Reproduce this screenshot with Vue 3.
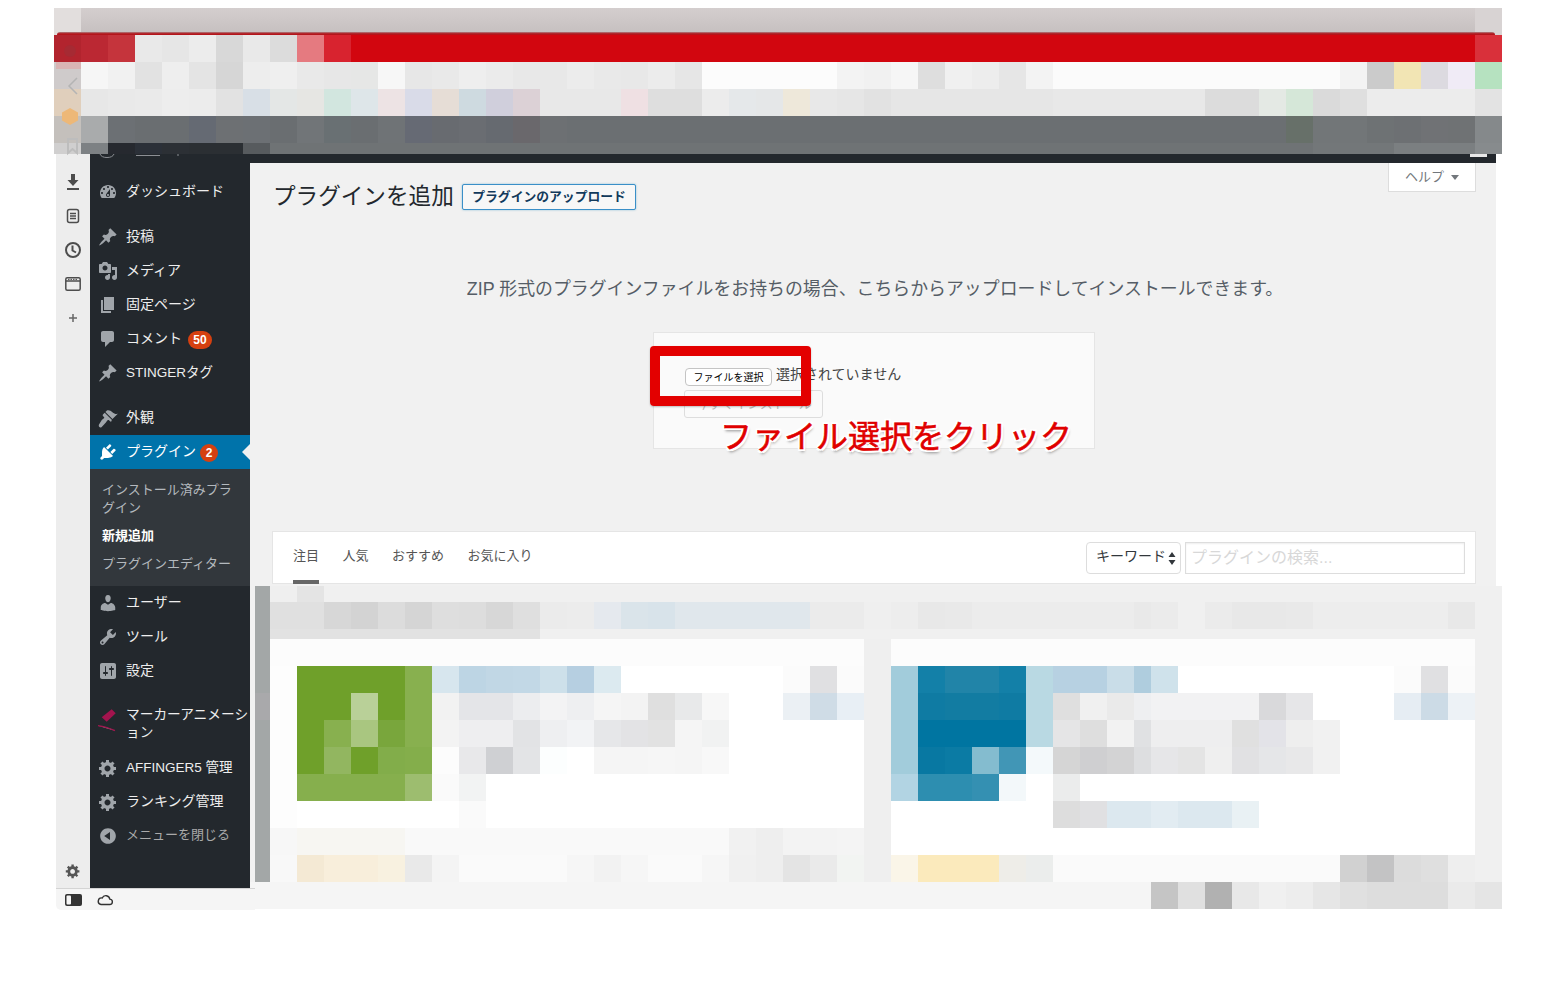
<script setup>
// mosaic rows: "hex" = one 27px cell, "w:hex" = w px wide, "n*hex" = n cells
const parseRow = (h, str) => {
  const cells = [];
  str.split(" ").forEach((t) => {
    let w = 27;
    let n = 1;
    let c = t;
    if (c.includes("*")) [n, c] = c.split("*");
    if (c.includes(":")) [w, c] = c.split(":");
    for (let i = 0; i < Number(n); i++) cells.push({ w: Number(w), c: "#" + c });
  });
  return { h, cells };
};

const topRows = [
  [27, "b2242e bb2833 c5343c e9e9e9 e6e6e6 ececec d8d8d8 e9e9e9 dcdcdc e57a80 d8232f 1124:d2060f d9303a"],
  [27, "cfcbcb f6f6f6 f1f1f1 e2e2e2 eeeeee e4e4e4 d6d6d6 ededed efefef e9e9e9 e7e7e7 e6e7e6 f7f7f7 e7e7e7 e9e9e9 eeeeee ebebeb e8e8e8 e8e8e8 ececec e9e9e9 e8e8e8 ececec e6e6e6 135:fcfcfc f3f3f3 f1f1f1 f6f6f6 dedede f0f0f0 ededed e6e6e6 f3f3f3 287:fbfbfb f3f3f3 cbcbcb f2e5b4 dcdae0 f0ebf6 b6e2c0"],
  [27, "e0cfbc e7e7e7 e9e9e9 eaeaea ededed ececec e2e2e2 d8dfe6 e4e7e6 e6e6e3 d2e6df dee6e9 ede3e4 d9dbe8 e6ddd6 cedae0 d0cfdc dcd1d6 3*e8e8e8 efe0e3 54:dedede ececec e5e8ea e5e7e8 eee8da e8e8e8 e6e6e6 e2e2e2 e6e6e6 135:e6e6e6 152:e8e8e8 54:dcdcdc e4e9e4 d5e7d8 dadada dfdfdf 108:ececec e3e3e3"],
  [27, "c4c0bc a9abac 6c7074 6a6e71 6a6e71 656a73 6d7073 6c7074 6a6e71 717578 697073 6a6e71 6f7376 666a74 686b70 6a6d72 666a70 6a686c 6d7073 719:6b6f72 677069 727678 727678 6e7274 6d7073 707275 6f7274 85898b"],
  [11, "d0cfcf 7d8184 26292f 2b3038 2c3035 2b2f33 2b2f33 575b5e 1043:6f7375 81:737779 81:7b7f81 878b8d"],
].map(([h, s]) => parseRow(h, s));

const SB = "5:f1f1f1 15:a3a7a7 ";
const SB2 = "5:f1f1f1 15:a9a9ab ";
const lowerRows = [
  [16, SB + "efefef e4e4e4 1178:f0f0f0"],
  [27, SB + "2*e0e0e0 d7d7d7 d3d3d3 dcdcdc d5d5d5 dedede dddddd d7d7d7 dfdfdf ebebeb ececec e5e9ee dae4ea d8e3ea 5*e0e7ec ebebeb ebebeb efefef ededed e8e8e8 e9e9e9 6*ececec 17:e9e9e9 ebebeb f0f0f0 ebebeb e8e8e8 e8e8e8 e9e9e9 5*ededed e8e8e8 f0f0f0"],
  [10, SB + "10*e2e2e2 962:f0f0f0"],
  [27, SB + "594:fcfcfc efefef 584:fcfcfc f0f0f0"],
  [27, SB + "fdfdfd 4*6fa02a 88b04f d7e6ee bdd5e4 c1d7e5 c2d8e6 cde0ea b6cfe1 dceaf0 6*ffffff fbfbfb e0e0e2 fbfbfb efefef a2ccdb 1380a8 2184a8 2184a8 1380a8 b9d9e3 b7d1e2 b7d1e2 c9dde8 17:afcdde cfe2eb 8*ffffff fbfbfb e0e0e2 fbfbfb f0f0f0"],
  [27, SB2 + "fdfdfd 2*6fa02a b9d098 6fa02a 88b04f f2f2f2 e4e5e8 e4e5e8 ecedef f3f3f4 eeeff1 f5f5f5 f3f3f3 dfdfdf e8e9ea f7f7f7 2*ffffff ebf0f4 cfdce6 e8eff5 efefef a2ccdb 0f7ba3 127ca2 127ca2 0f7ba3 b9d9e3 dfdfdf f0f0f0 eaeaea 17:eeeff1 4*f2f2f3 d9d9db e6e6e8 3*ffffff e6edf3 ccdbe6 edf2f6 f0f0f0"],
  [27, SB + "fdfdfd 6fa02a 88b04f a9c680 79a63c 88b04f f3f3f3 eeeef0 eeeef0 e2e3e5 eeeff1 f2f3f5 e6e7e9 e3e3e5 e2e2e2 f5f5f5 f1f2f2 5*ffffff efefef a2ccdb 4*0075a1 b9d9e3 e5e5e6 dedede f2f2f2 17:e0e1e3 3*eeeeef e0e0e0 e3e3e8 eeeeee f1f1f1 5*ffffff f0f0f0"],
  [27, SB + "fdfdfd 6fa02a 92b660 6fa02a 82ad4a 84ae4b fcfcfc e8e8ea cfd0d3 e3e4e6 fcfefe ffffff f5f5f5 f5f5f5 f6f6f6 f5f5f5 f8f8f8 5*ffffff efefef a2ccdb 0878a2 0b7ba4 84bccf 4196b6 f4f9fb d5d5d5 cfcfd1 d3d3d4 17:dddee0 e6e6e8 e4e4e4 efefef e1e1e3 e5e6e8 e8e8e9 f1f1f1 5*ffffff f0f0f0"],
  [27, SB + "fdfdfd 4*86af4d 9dbd6f fafafa f2f3f3 14*ffffff efefef b2d4e3 2*2d8eb0 3490b2 f3f8fa ffffff ebecec 395:ffffff f0f0f0"],
  [27, SB + "fdfdfd 6*ffffff fafafa 14*ffffff efefef 6*ffffff dddddd e0e0e2 44:dce8ef e2ecf2 54:dce8ef e9f1f4 216:ffffff f0f0f0"],
  [27, SB + "f7f7f7 108:f7f6f2 324:f9f9f9 f1f1f1 eeeeee f3f3f3 f3f3f3 f4f4f4 efefef 584:ffffff f0f0f0"],
  [27, SB + "f8f8f8 f4e9d4 54:f8eedb f8f1e0 e9e9e9 f4f4f4 108:fafafa f6f6f6 f2f2f2 f6f6f6 fafafa fafafa f6f6f6 f0f0f0 eeeeee e4e4e4 eaeaea f2f4f2 efefef faf5e8 81:fbeabc eeede8 ebedec 287:fafafa d1d1d1 c3c3c4 dcdcdc dfdfdf eeeeee f0f0f0"],
  [27, "901:f5f5f5 c5c5c5 e0e0e0 b1b1b1 e8e8e8 f0f0f0 ededed e6e6e6 e0e0e0 3*dddddd eaeaea e5e5e5"],
].map(([h, s]) => parseRow(h, s));

const icons = {
  dashboard: "M3.76 16h12.48c1.1-1.37 1.76-3.11 1.76-5 0-4.42-3.58-8-8-8s-8 3.58-8 8c0 1.89.66 3.63 1.76 5zM10 4c.55 0 1 .45 1 1s-.45 1-1 1-1-.45-1-1 .45-1 1-1zM6 6c.55 0 1 .45 1 1s-.45 1-1 1-1-.45-1-1 .45-1 1-1zm8 0c.55 0 1 .45 1 1s-.45 1-1 1-1-.45-1-1 .45-1 1-1zm-5.37 5.55L12 7v6c0 1.1-.9 2-2 2s-2-.9-2-2c0-.57.24-1.08.63-1.45zM4 10c.55 0 1 .45 1 1s-.45 1-1 1-1-.45-1-1 .45-1 1-1zm12 0c.55 0 1 .45 1 1s-.45 1-1 1-1-.45-1-1 .45-1 1-1zm-5 3c0-.55-.45-1-1-1s-1 .45-1 1 .45 1 1 1 1-.45 1-1z",
  pin: "M10.44 3.02l1.82-1.82 6.36 6.35-1.83 1.82c-1.05-.68-2.48-.57-3.41.36l-.75.75c-.92.93-1.04 2.35-.35 3.41l-1.83 1.82-2.41-2.41-2.8 2.79c-.42.42-3.38 2.71-3.8 2.29s1.86-3.39 2.28-3.81l2.79-2.79L4.1 9.36l1.83-1.82c1.05.69 2.48.57 3.4-.36l.75-.75c.93-.92 1.05-2.35.36-3.41z",
  media: "M13 11V4c0-.55-.45-1-1-1h-1.67L9 1H5L3.67 3H2c-.55 0-1 .45-1 1v7c0 .55.45 1 1 1h10c.55 0 1-.45 1-1zM7 4.5c1.38 0 2.5 1.12 2.5 2.5S8.38 9.5 7 9.5 4.5 8.38 4.5 7 5.62 4.5 7 4.5zM14 6h5v10.5c0 1.38-1.12 2.5-2.5 2.5S14 17.88 14 16.5s1.12-2.5 2.5-2.5c.17 0 .34.02.5.05V9h-3V6zm-4 8.05V13h2v3.5c0 1.38-1.12 2.5-2.5 2.5S7 17.88 7 16.5 8.12 14 9.5 14c.17 0 .34.02.5.05z",
  page: "M6 15V2h10v13H6zm-1 1h8v2H3V5h2v11z",
  comment: "M5 2h9c1.1 0 2 .9 2 2v7c0 1.1-.9 2-2 2h-2l-5 5v-5H5c-1.1 0-2-.9-2-2V4c0-1.1.9-2 2-2z",
  brush: "M14.48 11.06L7.41 3.99l1.5-1.5c.5-.56 2.3-.47 3.51.32 1.21.8 1.43 1.28 2.91 2.1 1.18.64 2.45 1.26 4.45.85zm-.71.71L6.7 4.7 4.93 6.47c-.39.39-.39 1.02 0 1.41l1.06 1.06c.39.39.39 1.03 0 1.42-.6.6-1.43 1.11-2.21 1.69L1 16.5c-.5 1-.2 2 .4 2.6.6.5 1.6.4 2.3-.2l4.2-4.4c.6-.8 1.1-1.6 1.7-2.2.39-.39 1.03-.39 1.42 0l1.06 1.06c.39.39 1.02.39 1.41 0z",
  plug: "M13.11 4.36L9.87 7.6 8 5.73l3.24-3.24c.35-.34 1.05-.2 1.56.32.52.51.66 1.21.31 1.55zm-8 1.77l.91-1.12 9.01 9.01-1.19.84c-.71.71-2.63 1.16-3.82 1.16H6.14L4.9 17.26c-.59.59-1.54.59-2.12 0-.59-.58-.59-1.53 0-2.12l1.24-1.24v-3.88c0-1.13.4-3.19 1.09-3.89zm7.26 3.97l3.24-3.24c.34-.35 1.04-.21 1.55.31.52.51.66 1.21.31 1.55l-3.24 3.25z",
  user: "M10 9.25c-2.27 0-2.73-3.44-2.73-3.44C7 4.02 7.82 2 9.97 2c2.16 0 2.98 2.02 2.71 3.81 0 0-.41 3.44-2.68 3.44zm0 2.57L12.72 10c2.39 0 4.52 2.33 4.52 4.53v2.49s-3.65 1.13-7.24 1.13c-3.65 0-7.24-1.13-7.24-1.13v-2.49c0-2.25 1.94-4.48 4.47-4.48z",
  wrench: "M16.68 9.77c-1.34 1.34-3.3 1.67-4.95.99l-5.41 6.52c-.99.99-2.59.99-3.58 0s-.99-2.59 0-3.57l6.52-5.42c-.68-1.65-.35-3.61.99-4.95 1.28-1.28 3.12-1.62 4.72-1.06l-2.89 2.89 2.82 2.82 2.86-2.87c.53 1.58.18 3.39-1.08 4.65zM3.81 16.21c.4.39 1.04.39 1.43 0 .4-.4.4-1.04 0-1.43-.39-.4-1.03-.4-1.43 0-.39.39-.39 1.03 0 1.43z",
  settings: "M18 16V4c0-1.1-.9-2-2-2H4c-1.1 0-2 .9-2 2v12c0 1.1.9 2 2 2h12c1.1 0 2-.9 2-2zM8 11h1c.55 0 1 .45 1 1s-.45 1-1 1H8v1.5c0 .28-.22.5-.5.5s-.5-.22-.5-.5V13H6c-.55 0-1-.45-1-1s.45-1 1-1h1V5.5c0-.28.22-.5.5-.5s.5.22.5.5V11zm5-2h-1c-.55 0-1-.45-1-1s.45-1 1-1h1V5.5c0-.28.22-.5.5-.5s.5.22.5.5V7h1c.55 0 1 .45 1 1s-.45 1-1 1h-1v5.5c0 .28-.22.5-.5.5s-.5-.22-.5-.5V9z",
  gear: "M18 12h-2.18c-.17.7-.44 1.35-.81 1.93l1.54 1.54-2.1 2.1-1.54-1.54c-.58.36-1.23.63-1.91.79V19H8v-2.18c-.68-.16-1.33-.43-1.91-.79l-1.54 1.54-2.12-2.12 1.54-1.54c-.36-.58-.63-1.23-.79-1.91H1V9.03h2.17c.16-.7.44-1.35.8-1.94L2.43 5.55l2.1-2.1 1.54 1.54c.58-.37 1.24-.64 1.93-.81V2h3v2.18c.68.16 1.33.43 1.91.79l1.54-1.54 2.12 2.12-1.54 1.54c.36.59.64 1.24.8 1.94H18V12zm-8.5 1.5c1.66 0 3-1.34 3-3s-1.34-3-3-3-3 1.34-3 3 1.34 3 3 3z",
  collapse: "M10 2.16c4.33 0 7.84 3.51 7.84 7.84s-3.51 7.84-7.84 7.84S2.16 14.33 2.16 10 5.71 2.16 10 2.16zm2 11.72V6.12L6.18 9.97z",
};

const menuTop = [
  { label: "ダッシュボード", icon: "dashboard", gap: 12 },
  { label: "投稿", icon: "pin", gap: 11 },
  { label: "メディア", icon: "media" },
  { label: "固定ページ", icon: "page" },
  { label: "コメント", icon: "comment", badge: "50" },
  { label: "STINGERタグ", icon: "pin", latin: true },
  { label: "外観", icon: "brush", gap: 11 },
];
const menuBottom = [
  { label: "ユーザー", icon: "user" },
  { label: "ツール", icon: "wrench" },
  { label: "設定", icon: "settings" },
  { label: "マーカーアニメーシ\nョン", icon: "marker", gap: 11, tall: true },
  { label: "AFFINGER5 管理", icon: "gear", latin: true },
  { label: "ランキング管理", icon: "gear" },
  { label: "メニューを閉じる", icon: "collapse", dim: true },
];
const subMenu = [
  { label: "インストール済みプラ\nグイン" },
  { label: "新規追加", current: true },
  { label: "プラグインエディター" },
];
const tabs = ["注目", "人気", "おすすめ", "お気に入り"];
</script>

<template>
  <div class="page">
    <!-- top pixelated browser chrome -->
    <div class="top">
      <div class="chrome-top"><div class="chrome-line"></div></div>
      <div v-for="(row, i) in topRows" :key="i" class="row" :style="{ height: row.h + 'px' }">
        <div v-for="(c, j) in row.cells" :key="j" :style="{ width: c.w + 'px', background: c.c }"></div>
      </div>
      <svg class="ghosts" width="27" height="146" viewBox="0 0 27 146" fill="none">
        <circle cx="16" cy="43" r="6" fill="#a62a33" />
        <rect x="2" y="54" width="25" height="7" fill="#d9b4b4" />
        <path d="M23 70l-8 8 8 8" stroke="#b4b4b4" stroke-width="1.5" />
        <path d="M16 100l8 4.5v8l-8 4.5-8-4.5v-8z" fill="#edb878" />
        <path d="M14 131h9v14l-4.5-4-4.5 4z" stroke="#bdbdbd" stroke-width="2" />
      </svg>
    </div>

    <div class="browser">
      <div class="left-col">
        <div class="left-top">
          <!-- mac side strip -->
          <div class="strip">
            <div class="strip-item">
              <svg width="16" height="18" viewBox="0 0 16 18" fill="#4d4d4d"><path d="M6 1h4v6h3.5L8 13 2.500 7H6zM2 15h12v2H2z" /></svg>
            </div>
            <div class="strip-item">
              <svg width="14" height="16" viewBox="0 0 14 16" fill="none" stroke="#4d4d4d" stroke-width="1.500"><rect x="1.500" y="1.500" width="11" height="13" rx="2" /><path d="M4 5.500h6M4 8h6M4 10.500h6" /></svg>
            </div>
            <div class="strip-item">
              <svg width="18" height="18" viewBox="0 0 18 18" fill="none" stroke="#4d4d4d" stroke-width="2"><circle cx="9" cy="9" r="7" /><path d="M8.500 4.500V9.500l3.500 2" /></svg>
            </div>
            <div class="strip-item">
              <svg width="16" height="14" viewBox="0 0 16 14" fill="none" stroke="#4d4d4d" stroke-width="1.500"><rect x=".8" y=".8" width="14.400" height="12.400" rx="1.500" /><path d="M1 4h14" /><path d="M3 2.400h10" stroke-dasharray="1.500 1" stroke-width="1" /></svg>
            </div>
            <div class="strip-item">
              <svg width="10" height="10" viewBox="0 0 10 10" fill="none" stroke="#666" stroke-width="1.500"><path d="M5 1v8M1 5h8" /></svg>
            </div>
            <div class="strip-item strip-end">
              <svg width="16" height="16" viewBox="0 0 20 20" fill="#555"><path :d="icons.gear" fill-rule="evenodd" /></svg>
            </div>
          </div>

          <!-- wp sidebar -->
          <nav class="sidebar">
            <svg class="bar-bits" width="160" height="9" viewBox="0 0 160 9" fill="none" stroke="#8c8f94"><path d="M10 0c1 2.500 3.500 3.500 7 3.500S23 2.500 24 0" stroke-width="1" /><path d="M46 1.500h24" /><path d="M88 0v2" /></svg>
            <div
              v-for="m in menuTop"
              :key="m.label"
              :class="['item', { latin: m.latin }]"
              :style="{ marginTop: (m.gap || 0) + 'px' }"
            >
              <svg class="ico" width="20" height="20" viewBox="0 0 20 20"><path :d="icons[m.icon]" fill-rule="evenodd" /></svg>
              <span class="label">{{ m.label }}</span>
              <span v-if="m.badge" class="badge wide">{{ m.badge }}</span>
            </div>

            <div class="item active">
              <svg class="ico" width="20" height="20" viewBox="0 0 20 20"><path :d="icons.plug" fill-rule="evenodd" /></svg>
              <span class="label">プラグイン</span>
              <span class="badge">2</span>
              <span class="arrow"></span>
            </div>
            <div class="submenu">
              <div v-for="s in subMenu" :key="s.label" :class="['sub', { current: s.current }]">{{ s.label }}</div>
            </div>

            <div
              v-for="m in menuBottom"
              :key="m.label"
              :class="['item', { tall: m.tall, dim: m.dim, latin: m.latin }]"
              :style="{ marginTop: (m.gap || 0) + 'px' }"
            >
              <svg v-if="m.icon === 'marker'" class="ico" width="20" height="26" viewBox="0 0 20 26" fill="none">
                <path d="M13.700 3.300l4 4-9 8.400-5-4.400z" fill="#a3144e" />
                <path d="M0 19.700c3 .4 5.500.9 8 1.600 3 .8 6 2 9 3.400" stroke="#a3144e" stroke-width="1.300" />
              </svg>
              <svg v-else class="ico" width="20" height="20" viewBox="0 0 20 20"><path :d="icons[m.icon]" fill-rule="evenodd" /></svg>
              <span class="label">{{ m.label }}</span>
            </div>
          </nav>
        </div>

        <!-- bottom bar -->
        <div class="foot">
          <svg width="17" height="12" viewBox="0 0 17 12"><rect width="17" height="12" rx="2" fill="#333" /><rect x="1.500" y="1.500" width="4.500" height="9" rx="1" fill="#f5f5f5" /></svg>
          <svg width="16" height="12" viewBox="0 0 16 12" fill="none" stroke="#333" stroke-width="1.400"><path d="M4 10.500h8.500a2.700 2.700 0 0 0 .3-5.400A4 4 0 0 0 5.200 4 3.300 3.300 0 0 0 4 10.500z" /></svg>
        </div>
      </div>

      <div class="main">
        <div class="bar"><span class="bar-avatar"></span></div>
        <div class="wp">
          <div class="head">
            <h1 class="title">プラグインを追加</h1>
            <span class="upload-btn">プラグインのアップロード</span>
            <span class="help">ヘルプ<i class="help-caret"></i></span>
          </div>

          <p class="intro">ZIP 形式のプラグインファイルをお持ちの場合、こちらからアップロードしてインストールできます。</p>

          <div class="upload-box">
            <div class="file-row">
              <span class="file-btn">ファイルを選択</span>
              <span class="file-name">選択されていません</span>
            </div>
            <div class="install-btn">今すぐインストール</div>
            <div class="frame"></div>
            <div class="caption">ファイル選択をクリック</div>
          </div>

          <div class="filter">
            <div v-for="(t, i) in tabs" :key="t" :class="['tab', { on: i === 0 }]">{{ t }}</div>
            <div class="select">
              <span class="select-text">キーワード</span>
              <svg width="8" height="13" viewBox="0 0 8 13" fill="#32373c"><path d="M4 0l3.500 5H.500zM4 13L.500 8h7z" /></svg>
            </div>
            <input class="search" placeholder="プラグインの検索..." />
          </div>
        </div>

        <!-- pixelated plugin cards -->
        <div class="lower">
          <div v-for="(row, i) in lowerRows" :key="i" class="row" :style="{ height: row.h + 'px' }">
            <div v-for="(c, j) in row.cells" :key="j" :style="{ width: c.w + 'px', background: c.c }"></div>
          </div>
        </div>
      </div>
    </div>
  </div>
</template>

<style>
html,
body {
  background: #fff;
}
</style>

<style scoped>
.page {
  width: 1552px;
  height: 990px;
  overflow: hidden;
  padding: 8px 0 0 54px;
  box-sizing: border-box;
  background: #fff;
  font-family: "Liberation Sans", "Noto Sans CJK JP", sans-serif;
}

/* MOSAIC */
.row {
  display: flex;
}
.row > div {
  flex: none;
}
.top {
  position: relative;
  width: 1448px;
}
.chrome-top {
  height: 27px;
  display: flex;
  flex-direction: column;
  justify-content: flex-end;
  background: linear-gradient(90deg, #e2dedd 27px, transparent 27px, transparent 1421px, #d8d3d3 1421px),
    linear-gradient(#d4cece, #c5bfbf);
}
.chrome-line {
  height: 3px;
  margin: 0 7px 0 3px;
  background: linear-gradient(#ab8385, #b3151b 60%);
  border-radius: 4px 4px 0 0;
}
.ghosts {
  position: absolute;
  left: 0;
  top: 0;
  overflow: visible;
}

/* BROWSER */
.browser {
  display: flex;
  width: 1440px;
  margin-left: 2px;
}
.left-col {
  width: 194px;
  flex: none;
}
.left-top {
  display: flex;
  height: 734px;
}

/* SIDE STRIP */
.strip {
  width: 34px;
  background: #ededed;
  display: flex;
  flex-direction: column;
  padding-top: 11px;
  box-sizing: border-box;
}
.strip-item {
  height: 34px;
  display: flex;
  align-items: center;
  justify-content: center;
}
.strip-end {
  margin-top: auto;
}

/* SIDEBAR */
.sidebar {
  position: relative;
  width: 160px;
  padding-top: 9px;
  box-sizing: border-box;
  background: #23282d;
  overflow: hidden;
}
.bar-bits {
  position: absolute;
  left: 0;
  top: 0;
}
.item {
  display: flex;
  align-items: center;
  gap: 8px;
  height: 34px;
  padding-left: 8px;
  font-size: 14px;
  color: #eee;
  position: relative;
}
.item.latin {
  font-size: 13.5px;
}
.item.tall {
  height: 52px;
  line-height: 18px;
  align-items: flex-start;
  padding-top: 7px;
  box-sizing: border-box;
  font-size: 13.7px;
}
.item.dim {
  color: #aaa;
  font-size: 13px;
}
.ico {
  flex: none;
  fill: #a0a5aa;
}
.label {
  white-space: pre-line;
  flex: none;
  line-height: 18px;
  margin-top: -2px;
}
.latin .label {
  margin-top: 0;
}
.tall .label {
  margin-top: 0;
}
.badge {
  min-width: 18px;
  height: 18px;
  border-radius: 9px;
  background: #d54010;
  color: #fff;
  font-size: 12px;
  font-weight: 700;
  line-height: 18px;
  text-align: center;
  margin-left: -2px;
  margin-top: 2px;
}
.badge.wide {
  width: 24px;
}
.active .badge {
  margin-left: -4px;
}
.item.active {
  background: #0073aa;
  color: #fff;
  margin-top: 0;
}
.item.active .ico {
  fill: #fff;
}
.arrow {
  position: absolute;
  right: 0;
  top: 9px;
  border: 8px solid transparent;
  border-right-color: #f1f1f1;
  border-left-width: 0;
}
.submenu {
  height: 117px;
  padding: 7px 0 0 12px;
  box-sizing: border-box;
  background: #32373c;
}
.sub {
  white-space: pre-line;
  font-size: 13px;
  line-height: 18px;
  padding: 5px 0;
  color: #b4b9be;
}
.sub.current {
  color: #fff;
  font-weight: 700;
}

/* FOOT */
.foot {
  position: relative;
  z-index: 1;
  height: 22px;
  margin-right: -5px;
  border-top: 1px solid #d4d4d4;
  border-bottom-left-radius: 5px;
  box-sizing: border-box;
  background: #f5f5f5;
  display: flex;
  align-items: center;
  gap: 15px;
  padding-left: 9px;
}

/* MAIN */
.main {
  width: 1246px;
  flex: none;
}
.bar {
  height: 9px;
  background: #23282d;
  display: flex;
  justify-content: flex-end;
  padding-right: 9px;
}
.bar-avatar {
  width: 17px;
  height: 3px;
  background: #e8e8e8;
}
.wp {
  height: 423px;
  background: #f1f1f1;
  box-sizing: border-box;
  overflow: hidden;
}
.head {
  display: flex;
  align-items: flex-start;
  padding: 0 20px 0 23px;
  height: 47px;
}
.title {
  margin: 20px 8px 0 0;
  font-size: 22.6px;
  font-weight: 400;
  line-height: 28px;
  color: #23282d;
}
.upload-btn {
  margin-top: 21px;
  height: 26px;
  box-sizing: border-box;
  padding: 0 9.500px;
  border: 1px solid #3a8fc8;
  border-radius: 2px;
  background: #f7f7f7;
  box-shadow: 0 0 2px rgba(30, 140, 190, 0.5);
  font-size: 12.8px;
  font-weight: 700;
  line-height: 24px;
  color: #123a5c;
}
.help {
  margin-left: auto;
  width: 88px;
  height: 29px;
  box-sizing: border-box;
  padding-left: 16px;
  background: #fff;
  border: 1px solid #ddd;
  border-top: none;
  font-size: 13px;
  line-height: 26px;
  color: #72777c;
  display: flex;
  align-items: center;
  gap: 7px;
}
.help-caret {
  width: 0;
  height: 0;
  border: 4px solid transparent;
  border-top: 5px solid #72777c;
  border-bottom: none;
}
.intro {
  margin: 66px 0 0 4px;
  font-size: 17.9px;
  line-height: 26px;
  text-align: center;
  color: #555d66;
}

/* UPLOAD */
.upload-box {
  position: relative;
  width: 442px;
  height: 117px;
  margin: 30px 0 0 403px;
  padding: 35px 0 0 31px;
  box-sizing: border-box;
  background: #fafafa;
  border: 1px solid #e5e5e5;
}
.file-row {
  display: flex;
  align-items: center;
  gap: 4px;
  height: 18px;
}
.file-btn {
  width: 87px;
  height: 18px;
  box-sizing: border-box;
  border: 1px solid #c4c4c4;
  border-radius: 4px;
  background: #fff;
  font-size: 10px;
  line-height: 18px;
  text-align: center;
  color: #000;
}
.file-name {
  font-size: 14px;
  color: #444;
  margin-top: -8px;
}
.install-btn {
  width: 139px;
  height: 28px;
  box-sizing: border-box;
  margin: 4px 0 0 -1px;
  border: 1px solid #ddd;
  border-radius: 3px;
  font-size: 13px;
  line-height: 26px;
  text-align: center;
  color: #bbb;
}
.frame {
  position: absolute;
  left: -4px;
  top: 13px;
  width: 161px;
  height: 60px;
  box-sizing: border-box;
  border: 10px solid #e30000;
  border-radius: 4px;
  box-shadow: 0 1px 2px rgba(0, 0, 0, 0.25);
}
.caption {
  position: absolute;
  left: 66px;
  top: 82px;
  white-space: nowrap;
  font-size: 32px;
  line-height: 44px;
  color: #e00000;
  -webkit-text-stroke: 0.6px #e00000;
  text-shadow: 2px 0 #fff, -2px 0 #fff, 0 2px #fff, 0 -2px #fff, 2px 2px #fff, -2px 2px #fff, 2px -2px #fff, -2px -2px #fff,
    1px 3px 3px rgba(0, 0, 0, 0.45);
}

/* FILTER BAR */
.filter {
  display: flex;
  align-items: flex-start;
  width: 1204px;
  height: 53px;
  margin: 82px 0 0 22px;
  padding: 0 10px 0 20px;
  box-sizing: border-box;
  background: #fff;
  border: 1px solid #e5e5e5;
}
.tab {
  height: 52px;
  box-sizing: border-box;
  margin-right: 23.5px;
  font-size: 13px;
  line-height: 48px;
  color: #555;
}
.tab.on {
  border-bottom: 4px solid #666;
}
.select {
  margin: 10px 4px 0 auto;
  width: 95px;
  height: 32px;
  box-sizing: border-box;
  padding: 0 4px 0 9px;
  border: 1px solid #ddd;
  border-radius: 4px;
  font-size: 14px;
  color: #32373c;
  display: flex;
  align-items: center;
  justify-content: space-between;
}
.select-text {
  margin-top: -6px;
}
.search {
  margin-top: 10px;
  width: 280px;
  height: 32px;
  box-sizing: border-box;
  padding: 0 5px;
  border: 1px solid #ddd;
  box-shadow: inset 0 1px 2px rgba(0, 0, 0, 0.07);
  border-radius: 0;
  outline: none;
  background: #fff;
  font-family: "Liberation Sans", "Noto Sans CJK JP", sans-serif;
  font-size: 16px;
}
.search::placeholder {
  color: #d8d8d8;
  opacity: 1;
}

/* LOWER MOSAIC */
.lower {
  width: 1252px;
}
</style>
